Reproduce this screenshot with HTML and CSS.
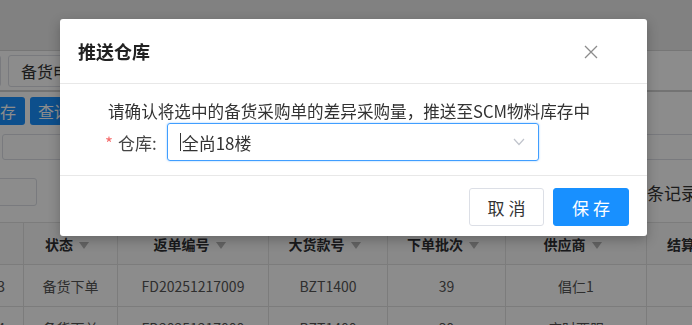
FILE: index.html
```html
<!DOCTYPE html>
<html lang="zh-CN">
<head>
    <meta charset="UTF-8">
    <title>推送仓库</title>
    <link rel="stylesheet" href="styles.css">
</head>
<body>

    <div id="page">
        <div class="topbar"></div>

        <div class="tabs">
            <span class="tab tab-prev">首页</span>
            <span class="tab">备货申请单</span>
        </div>

        <div class="toolbar">
            <button class="tool-btn btn-save">保存</button>
            <button class="tool-btn btn-query">查询</button>
        </div>

        <div class="filter">
            <div class="filter-input"></div>
        </div>

        <div class="pager">
            <div class="pager-size"></div>
            <span class="pager-total">共 2 条记录</span>
        </div>

        <table class="grid">
            <colgroup>
                <col style="width: 60px">
                <col style="width: 94px">
                <col style="width: 151px">
                <col style="width: 119px">
                <col style="width: 118px">
                <col style="width: 141px">
                <col style="width: 120px">
            </colgroup>
            <thead>
                <tr>
                    <th></th>
                    <th>状态<span class="sort"></span></th>
                    <th>返单编号<span class="sort"></span></th>
                    <th>大货款号<span class="sort"></span></th>
                    <th>下单批次<span class="sort"></span></th>
                    <th>供应商<span class="sort"></span></th>
                    <th>结算金额<span class="sort"></span></th>
                </tr>
            </thead>
            <tbody>
                <tr>
                    <td class="num">13</td>
                    <td>备货下单</td>
                    <td>FD20251217009</td>
                    <td>BZT1400</td>
                    <td>39</td>
                    <td>倡仁1</td>
                    <td></td>
                </tr>
                <tr>
                    <td class="num">14</td>
                    <td>备货下单</td>
                    <td>FD20251217009</td>
                    <td>BZT1400</td>
                    <td>39</td>
                    <td>应时西服</td>
                    <td></td>
                </tr>
            </tbody>
        </table>
    </div>

    <div class="mask"></div>

    <div class="dialog">
        <div class="dialog-header">
            <span class="dialog-title">推送仓库</span>
            <svg class="dialog-close" width="14" height="14" viewBox="0 0 14 14">
                <path d="M1 1 L13 13 M13 1 L1 13" stroke="#8c8c8c" stroke-width="1.3" fill="none"/>
            </svg>
        </div>
        <div class="dialog-body">
            <p class="dialog-tip">请确认将选中的备货采购单的差异采购量，推送至SCM物料库存中</p>
            <div class="form-item">
                <label class="form-label"><span class="required">*</span>仓库:</label>
                <div class="select">
                    <span class="cursor"></span>
                    <span class="select-value">全尚18楼</span>
                    <svg class="select-arrow" width="12" height="8" viewBox="0 0 12 8">
                        <path d="M1 1 L6 6.5 L11 1" stroke="#c0c4cc" stroke-width="1.2" fill="none"/>
                    </svg>
                </div>
            </div>
        </div>
        <div class="dialog-footer">
            <button class="btn">取消</button>
            <button class="btn btn-primary">保存</button>
        </div>
    </div>

</body>
</html>
```

FILE: styles.css
```css
* {
    box-sizing: border-box;
}
html, body {
    margin: 0;
    overflow: hidden;
}
body {
    font-family: "Noto Sans CJK SC", "Microsoft YaHei", sans-serif;
    color: #333;
    background-color: #fff;
}
#page {
    width: 800px;
}
.topbar {
    height: 51px;
    background-color: #ececec;
    border-bottom: 1px solid #d8d8d8;
}
.tabs {
    display: flex;
    gap: 7px;
    height: 41px;
    padding-top: 4px;
    border-bottom: 2px solid #d2d2d2;
}
.tab {
    height: 32px;
    padding: 0 12px;
    font-size: 16px;
    line-height: 30px;
    border: 1px solid #dcdfe6;
    border-radius: 3px;
    background-color: #fff;
}
.tab-prev {
    width: 61px;
    margin-left: -60px;
}
.toolbar {
    display: flex;
    gap: 5px;
    padding-top: 5px;
}
.tool-btn {
    height: 28px;
    padding: 0;
    font-family: inherit;
    font-size: 16px;
    color: #fff;
    border: none;
    border-radius: 3px;
    background-color: #1890ff;
}
.btn-save {
    width: 50px;
    margin-left: -25px;
}
.btn-query {
    width: 60px;
    text-align: left;
    padding-left: 8px;
}
.filter {
    margin-top: 9px;
}
.filter-input {
    width: 760px;
    height: 26px;
    margin-left: 2px;
    border: 1px solid #dcdfe6;
    border-radius: 3px;
}
.pager {
    display: flex;
    align-items: center;
    margin-top: 18px;
}
.pager-size {
    width: 50px;
    height: 28px;
    margin-left: -13px;
    border: 1px solid #dcdfe6;
    border-radius: 3px;
}
.pager-total {
    margin-left: 576px;
    font-size: 17px;
}
.grid {
    margin-top: 16px;
    margin-left: -37px;
    width: 803px;
    table-layout: fixed;
    border-collapse: collapse;
    font-size: 14px;
}
.grid th, .grid td {
    height: 42px;
    padding: 0;
    text-align: center;
    border: 1px solid #e2e2e2;
    white-space: nowrap;
    overflow: hidden;
}
.grid th {
    padding-right: 7px;
    color: #303133;
    font-weight: bold;
    background-color: #fafafa;
}
.grid td {
    color: #555;
}
.grid td.num {
    text-align: right;
    padding-right: 18px;
}
.sort {
    display: inline-block;
    width: 0;
    height: 0;
    margin-left: 6px;
    vertical-align: middle;
    border-left: 5px solid transparent;
    border-right: 5px solid transparent;
    border-top: 7px solid #b4b4b4;
}
.mask {
    position: fixed;
    top: 0;
    left: 0;
    right: 0;
    bottom: 0;
    background-color: rgba(0, 0, 0, 0.45);
}
.dialog {
    position: fixed;
    left: 60px;
    top: 19px;
    width: 587px;
    background-color: #fff;
    border-radius: 3px;
    box-shadow: 0 4px 12px rgba(0, 0, 0, 0.25);
}
.dialog-header {
    display: flex;
    align-items: center;
    justify-content: space-between;
    height: 65px;
    padding: 0 49px 0 18px;
    border-bottom: 1px solid #e8e8e8;
}
.dialog-title {
    font-size: 18px;
    font-weight: bold;
    color: #222;
}
.dialog-close {
    margin-top: 2px;
}
.dialog-body {
    height: 92px;
    padding-top: 16px;
    border-bottom: 1px solid #e8e8e8;
}
.dialog-tip {
    margin: 0 0 0 48px;
    font-size: 16.6px;
    line-height: 22px;
    color: #333;
}
.form-item {
    display: flex;
    align-items: center;
    margin-top: 1px;
    padding-left: 45px;
}
.form-label {
    font-size: 17px;
    color: #444;
}
.required {
    color: #f56c6c;
    margin-right: 5px;
}
.select {
    display: flex;
    align-items: center;
    width: 372px;
    height: 38px;
    margin-left: 10px;
    padding: 0 13px 0 12px;
    border: 1px solid #409eff;
    border-radius: 3px;
    box-shadow: 0 0 2px rgba(64, 158, 255, 0.6);
}
.cursor {
    width: 1px;
    height: 18px;
    background-color: #333;
}
.select-value {
    flex: 1;
    margin-left: 1px;
    font-size: 17px;
    color: #333;
}
.dialog-footer {
    display: flex;
    justify-content: flex-end;
    gap: 9px;
    height: 60px;
    padding: 12px 18px 0 0;
}
.btn {
    width: 75px;
    height: 38px;
    padding: 0 0 0 4px;
    font-family: inherit;
    font-size: 17px;
    letter-spacing: 4px;
    color: #333;
    border: 1px solid #dcdfe6;
    border-radius: 3px;
    background-color: #fff;
}
.btn-primary {
    width: 76px;
    color: #fff;
    border-color: #1890ff;
    background-color: #1890ff;
}
```
